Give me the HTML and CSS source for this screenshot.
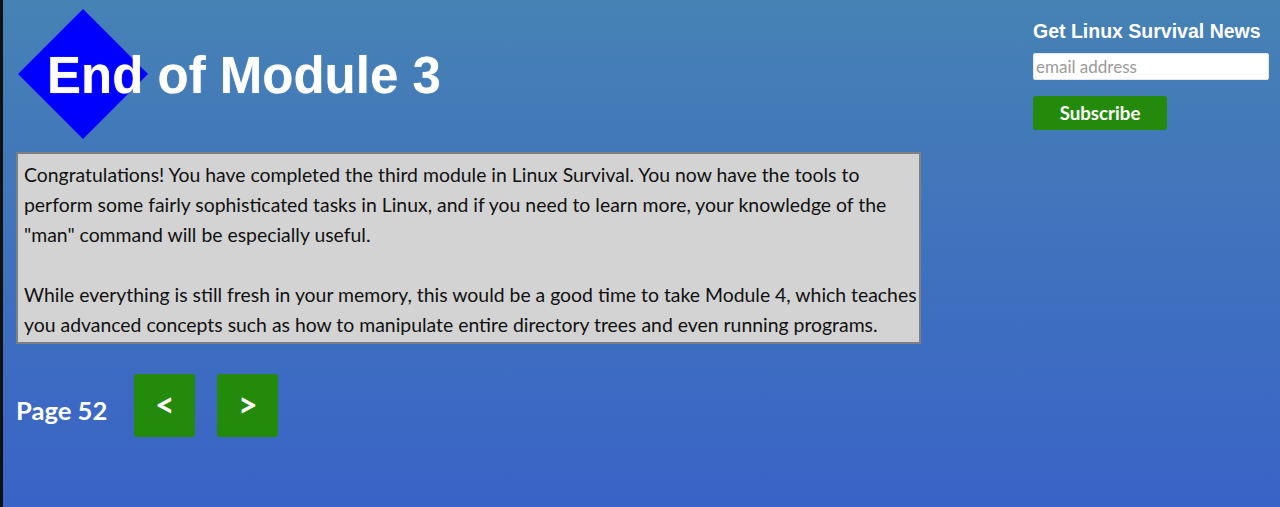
FILE: index.html
```html
<!DOCTYPE html>
<html lang="en">
<head>
<meta charset="utf-8">
<title>End of Module 3</title>
<link rel="stylesheet" href="styles.css">
</head>
<body>
<div class="page">
  <main class="main">
    <header class="header">
      <svg class="diamond" width="130" height="130" viewBox="0 0 130 130" aria-hidden="true">
        <polygon points="65,0 130,65 65,130 0,65" fill="#0000ff"/>
      </svg>
      <h1 class="title">End of Module 3</h1>
    </header>
    <section class="lesson">
      <p>Congratulations! You have completed the third module in Linux Survival. You now have the tools to perform some fairly sophisticated tasks in Linux, and if you need to learn more, your knowledge of the "man" command will be especially useful.</p>
      <p class="blank">&nbsp;</p>
      <p>While everything is still fresh in your memory, this would be a good time to take Module 4, which teaches you advanced concepts such as how to manipulate entire directory trees and even running programs.</p>
    </section>
    <nav class="pager">
      <span class="page-num">Page 52</span>
      <a class="nav-btn" href="#">&lt;</a>
      <a class="nav-btn" href="#">&gt;</a>
    </nav>
  </main>
  <aside class="sidebar">
    <h2 class="news-title">Get Linux Survival News</h2>
    <input class="email" type="text" placeholder="email address">
    <button class="subscribe" type="button">Subscribe</button>
  </aside>
</div>
</body>
</html>
```

FILE: styles.css
```css
html, body {
  margin: 0;
  padding: 0;
}
body {
  background: #3a63c6;
}
.page {
  display: flex;
  min-height: 507px;
  box-sizing: border-box;
  border-left: 3px solid #111;
  background: linear-gradient(to bottom, #4682b4 0%, #3f72be 50%, #3a63c7 100%);
  font-family: "Lato", "Liberation Sans", sans-serif;
}
.main {
  padding-left: 13px;
  width: 905px;
}
.header {
  position: relative;
  height: 152px;
  box-sizing: border-box;
  padding-top: 50px;
}
.diamond {
  position: absolute;
  left: 2px;
  top: 9px;
}
.title {
  position: relative;
  margin: 0 0 0 31px;
  font-family: "Liberation Sans", Arial, sans-serif;
  font-weight: bold;
  font-size: 51px;
  line-height: 51px;
  color: #fff;
  text-shadow: 0 0 1px rgba(220, 220, 220, 0.7);
}
.lesson {
  border: 2px solid #808080;
  background: #d3d3d3;
  padding: 6px 0 2px 6px;
  color: #111;
  font-size: 19.4px;
  line-height: 30px;
}
.lesson p {
  margin: 0;
}
.pager {
  display: flex;
  align-items: center;
  margin-top: 30px;
}
.page-num {
  color: #fff;
  font-weight: bold;
  font-size: 25.6px;
  margin-top: 8px;
  margin-right: 27px;
}
.nav-btn {
  display: flex;
  align-items: center;
  justify-content: center;
  width: 61px;
  height: 63px;
  margin-right: 22px;
  background: #248a0b;
  border-radius: 3px;
  color: #fff;
  text-decoration: none;
  font-weight: bold;
  font-size: 34px;
  line-height: 1;
  padding-bottom: 4px;
  box-sizing: border-box;
}
.sidebar {
  margin-left: 112px;
  padding-top: 20px;
  width: 236px;
  display: flex;
  flex-direction: column;
  align-items: flex-start;
}
.news-title {
  margin: 0;
  font-family: "Liberation Sans", Arial, sans-serif;
  font-weight: bold;
  font-size: 19.5px;
  line-height: 22px;
  color: #fff;
  white-space: nowrap;
}
.email {
  margin-top: 11px;
  width: 236px;
  height: 27px;
  box-sizing: border-box;
  border: 1px solid #e6e6e6;
  border-radius: 2px;
  padding: 0 2px;
  font-family: "Lato", sans-serif;
  font-size: 17px;
  background: #fff;
}
.email::placeholder {
  color: #9a9a9a;
}
.subscribe {
  margin-top: 16px;
  width: 134px;
  height: 34px;
  border: none;
  border-radius: 3px;
  background: #248a0b;
  color: #fff;
  font-family: "Lato", sans-serif;
  font-weight: bold;
  font-size: 18.7px;
  padding: 0;
}
```
